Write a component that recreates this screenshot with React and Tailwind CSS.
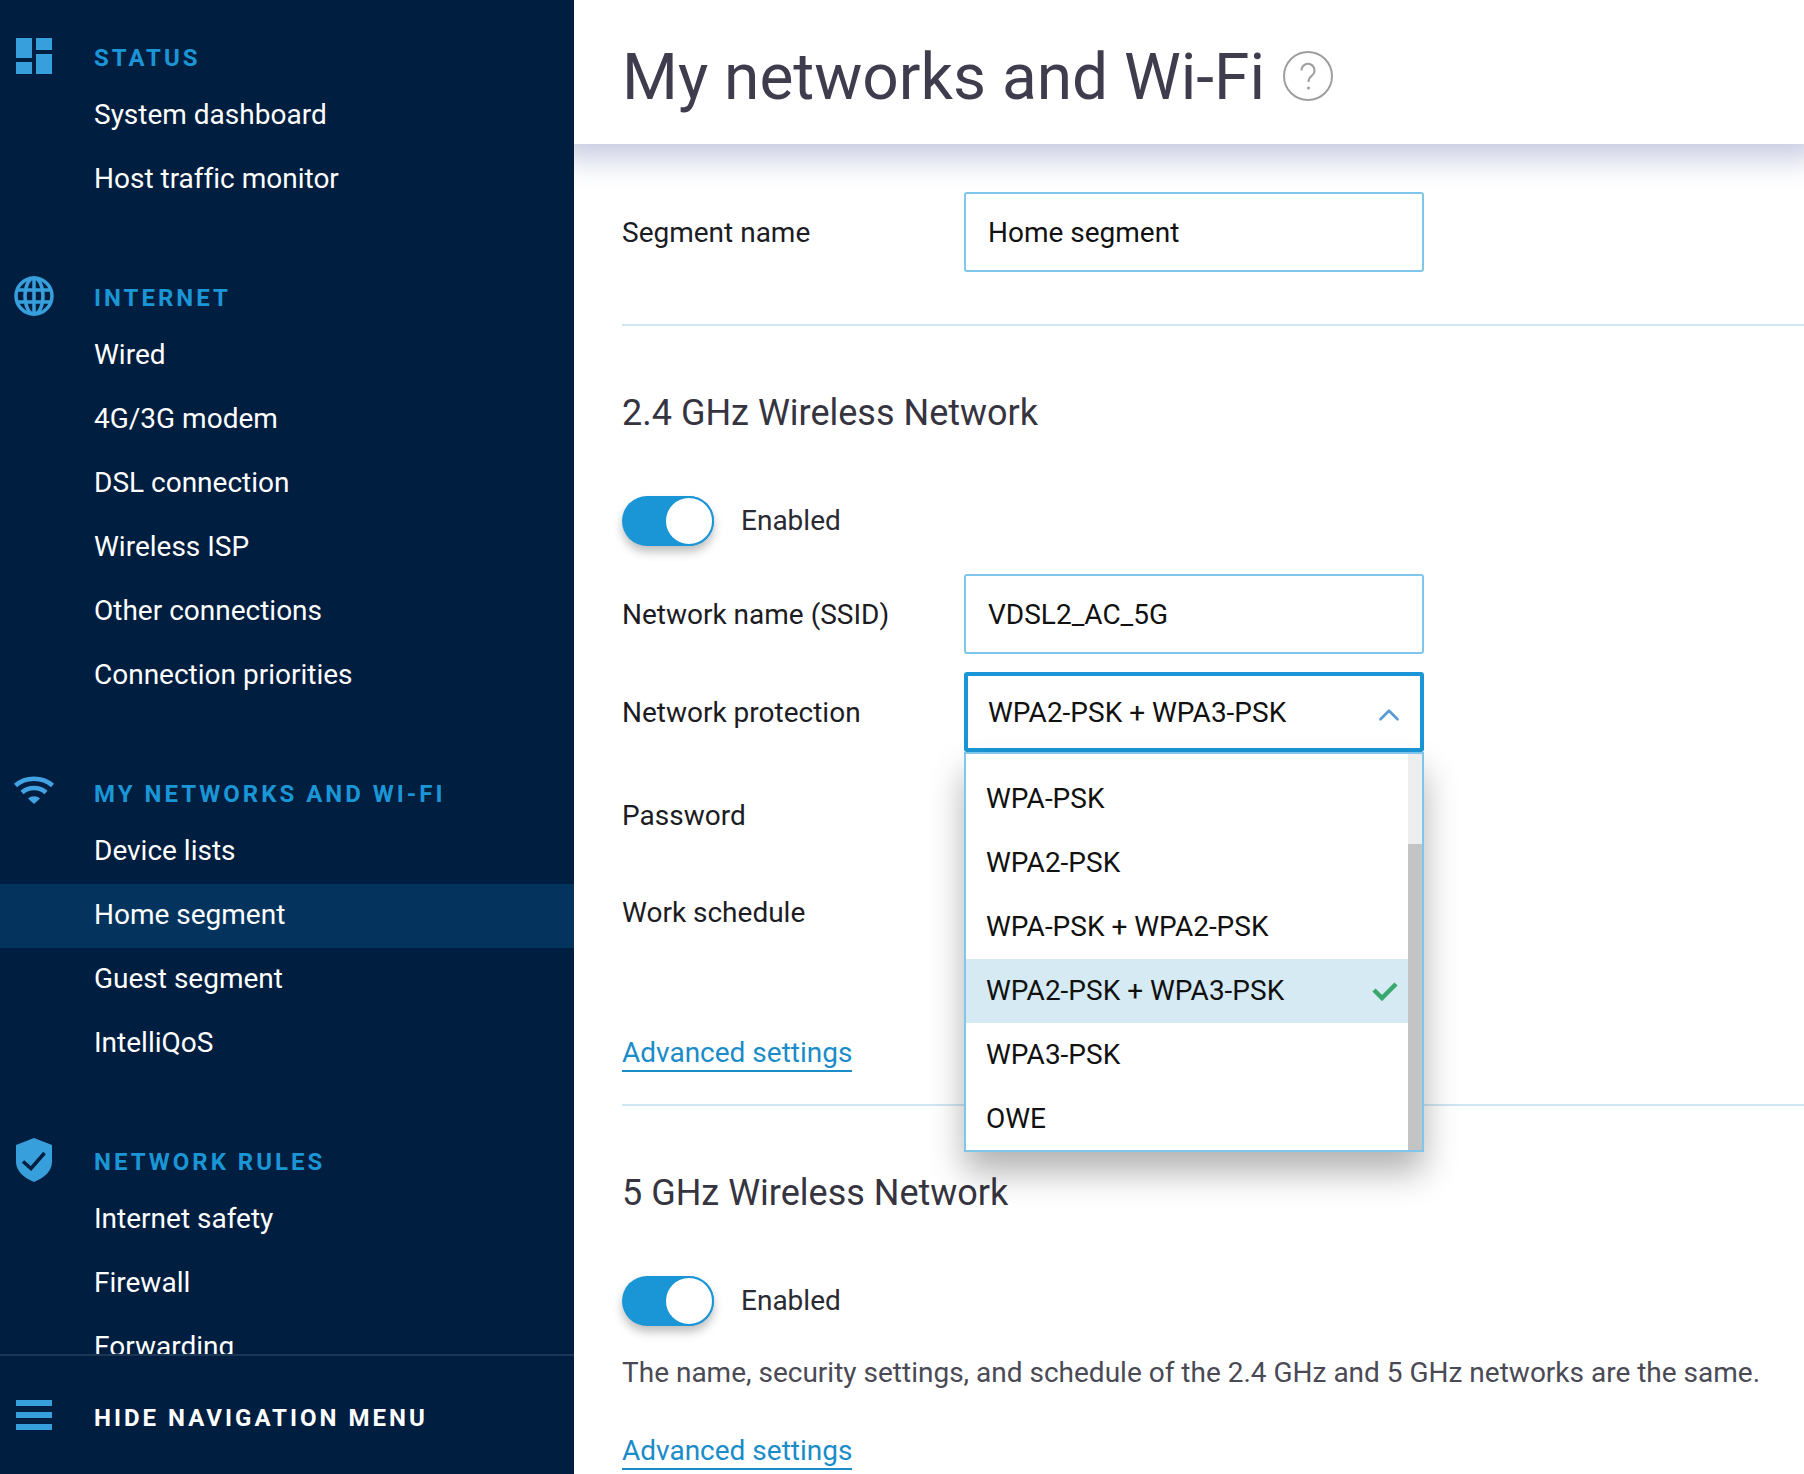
import { ChevronUp } from 'lucide-react';

const NAV = [
    { title: 'STATUS', icon: 'status', items: ['System dashboard', 'Host traffic monitor'] },
    { title: 'INTERNET', icon: 'globe', items: ['Wired', '4G/3G modem', 'DSL connection', 'Wireless ISP', 'Other connections', 'Connection priorities'] },
    { title: 'MY NETWORKS AND WI-FI', icon: 'wifi', items: ['Device lists', 'Home segment', 'Guest segment', 'IntelliQoS'] },
    { title: 'NETWORK RULES', icon: 'shield', items: ['Internet safety', 'Firewall', 'Forwarding'] },
];

const OPTIONS = ['WPA-PSK', 'WPA2-PSK', 'WPA-PSK + WPA2-PSK', 'WPA2-PSK + WPA3-PSK', 'WPA3-PSK', 'OWE'];

function NavIcon({ name }) {
    if (name === 'status') {
        return (
            <svg width="36" height="36" viewBox="0 0 36 36" fill="#379fdc" className="-mt-1">
                <rect x="0" y="0" width="16" height="20" />
                <rect x="20" y="0" width="16" height="12" />
                <rect x="0" y="24" width="16" height="12" />
                <rect x="20" y="16" width="16" height="20" />
            </svg>
        );
    }
    if (name === 'globe') {
        return (
            <svg width="40" height="40" viewBox="0 0 40 40" fill="none" stroke="#379fdc" strokeWidth="3.5" className="-mt-1">
                <circle cx="20" cy="20" r="18" />
                <ellipse cx="20" cy="20" rx="9" ry="18" />
                <path d="M4 14h32M4 26h32M20 2v36" />
            </svg>
        );
    }
    if (name === 'wifi') {
        return (
            <svg width="40" height="28" viewBox="0 0 40 28" className="-mt-2">
                <path d="M1.5 9.5C11.5 .5 28.5 .5 38.5 9.5" fill="none" stroke="#41a3e3" strokeWidth="4.5" />
                <path d="M8 16.5C14.5 10.5 25.5 10.5 32 16.5" fill="none" stroke="#41a3e3" strokeWidth="4.5" />
                <path d="M14 22.5C17.5 19.5 22.5 19.5 26 22.5L20 28Z" fill="#41a3e3" />
            </svg>
        );
    }
    return (
        <svg width="36" height="44" viewBox="0 0 36 44" className="-mt-1">
            <path d="M18 0L36 7V24C36 33 28 40 18 44C8 40 0 33 0 24V7Z" fill="#379fdc" />
            <path d="M7 23.5L15 30.5L28.5 15" fill="none" stroke="#001e3f" strokeWidth="3.5" />
        </svg>
    );
}

function Toggle() {
    return (
        <div className="flex items-center h-[50px]">
            <div className="w-[92px] h-[50px] rounded-full bg-[#1a96d6] flex justify-end items-center shadow-[0_6px_10px_rgba(0,0,0,0.25)]">
                <div className="w-[50px] h-[50px] rounded-full bg-white border-2 border-[#1a96d6]" />
            </div>
            <span className="ml-[27px] text-[28px] leading-9 text-[#2a2a33]">Enabled</span>
        </div>
    );
}

function Field({ label, value, className }) {
    return (
        <div className={`flex items-center ${className}`}>
            <label className="w-[342px] pt-0.5 text-[28px] leading-9 text-[#1c1c24]">{label}</label>
            <div className="w-[460px] h-[80px] border-2 border-[#7fc6ea] rounded-[3px] px-[22px] pt-0.5 flex items-center text-[28px] text-[#111]">
                {value}
            </div>
        </div>
    );
}

function AdvancedLink({ className }) {
    return (
        <div className={className}>
            <a className="inline-block text-[28px] leading-[34px] text-[#1a8cc8] border-b-2 border-[#1a8cc8]">Advanced settings</a>
        </div>
    );
}

export default function App() {
    return (
        <div className="flex w-full h-[1474px] overflow-hidden bg-white font-['Roboto',sans-serif] [font-variant-ligatures:none]">
            {/* Sidebar */}
            <aside className="relative z-20 w-[574px] shrink-0 h-full flex flex-col bg-[#001e3f]">
                <nav className="flex-1 overflow-hidden pt-[33px]">
                    {NAV.map((section) => (
                        <section key={section.title} className="mb-[61px]">
                            <div className="flex items-center h-[51px] pb-0.5">
                                <div className="w-[68px] mr-[26px] flex justify-center">
                                    <NavIcon name={section.icon} />
                                </div>
                                <span className="text-[24px] font-bold tracking-[3px] text-[#1a96d6]">{section.title}</span>
                            </div>
                            {section.items.map((item) => (
                                <div key={item}
                                    className={`h-16 pl-[94px] pb-0.5 flex items-center text-[28px] text-white ${item === 'Home segment' ? 'bg-[#04345e]' : ''}`}>
                                    {item}
                                </div>
                            ))}
                        </section>
                    ))}
                </nav>
                <div className="h-[120px] shrink-0 border-t-2 border-[#1c3755] flex items-center">
                    <div className="w-[68px] mr-[26px] flex justify-center">
                        <div className="w-9 flex flex-col gap-1.5">
                            <div className="h-1.5 bg-[#379fdc]" />
                            <div className="h-1.5 bg-[#379fdc]" />
                            <div className="h-1.5 bg-[#379fdc]" />
                        </div>
                    </div>
                    <span className="mt-1.5 text-[24px] font-bold tracking-[3px] text-white">HIDE NAVIGATION MENU</span>
                </div>
            </aside>

            {/* Main */}
            <main className="flex-1 min-w-0">
                <header className="relative z-10 h-[144px] bg-white pl-12 pt-3 flex items-center shadow-[0_0_28px_14px_rgba(60,75,150,0.3)]">
                    <h1 className="text-[64px] leading-none text-[#3f3d4d]">My networks and Wi-Fi</h1>
                    <svg width="50" height="50" viewBox="0 0 50 50" fill="none" className="ml-[18px] -mt-1">
                        <circle cx="25" cy="25" r="24" stroke="#9e9e9e" strokeWidth="2" />
                        <path d="M18.5 19.5a6.5 6.5 0 1 1 10.5 5c-2.5 1.9-3.5 3-3.5 6.5" stroke="#9e9e9e" strokeWidth="2" />
                        <circle cx="25.5" cy="37" r="1.5" fill="#9e9e9e" />
                    </svg>
                </header>

                <div className="pl-12 pt-12">
                    <Field label="Segment name" value="Home segment" />
                    <div className="mt-[52px] h-0.5 bg-[#cde8f3]" />

                    <h2 className="mt-[63px] text-[36px] leading-[48px] text-[#35343f]">2.4 GHz Wireless Network</h2>
                    <div className="mt-[59px]"><Toggle /></div>
                    <Field label="Network name (SSID)" value="VDSL2_AC_5G" className="mt-7" />

                    <div className="mt-[18px] flex items-center">
                        <label className="w-[342px] pt-0.5 text-[28px] leading-9 text-[#1c1c24]">Network protection</label>
                        <div className="relative w-[460px]">
                            <div className="h-[80px] border-4 border-[#1a96d6] rounded-[3px] pl-5 pr-[14px] pt-0.5 flex items-center justify-between text-[28px] text-[#111]">
                                WPA2-PSK + WPA3-PSK
                                <ChevronUp size={34} strokeWidth={1.9} className="text-[#5a9bd5] mt-1" />
                            </div>
                            {/* Open dropdown */}
                            <div className="absolute z-20 left-0 top-[80px] w-[460px] h-[400px] bg-white border-2 border-[#7fc6ea] flex shadow-[0_20px_32px_rgba(0,0,0,0.3)]">
                                <ul className="flex-1 pt-[13px]">
                                    {OPTIONS.map((opt) => (
                                        <li key={opt}
                                            className={`h-16 pl-5 pr-2.5 flex items-center justify-between text-[28px] text-[#111] ${opt === 'WPA2-PSK + WPA3-PSK' ? 'bg-[#d5eaf3]' : ''}`}>
                                            {opt}
                                            {opt === 'WPA2-PSK + WPA3-PSK' && (
                                                <svg width="26" height="20" viewBox="0 0 26 20" fill="none" stroke="#3aa76d" strokeWidth="4.5">
                                                    <path d="M2 9L10 17L24 3" />
                                                </svg>
                                            )}
                                        </li>
                                    ))}
                                </ul>
                                <div className="w-[14px] flex flex-col bg-[#eeeeee]">
                                    <div className="h-[90px]" />
                                    <div className="flex-1 bg-[#c4c4c4]" />
                                </div>
                            </div>
                        </div>
                    </div>

                    <Field label="Password" value="" className="mt-[23px]" />
                    <Field label="Work schedule" value="" className="mt-[17px]" />
                    <AdvancedLink className="mt-[84px]" />
                    <div className="mt-[32px] h-0.5 bg-[#cde8f3]" />

                    <h2 className="mt-[63px] text-[36px] leading-[48px] text-[#35343f]">5 GHz Wireless Network</h2>
                    <div className="mt-[59px]"><Toggle /></div>
                    <p className="mt-[29px] text-[28px] leading-9 text-[#4a4a55] whitespace-nowrap">
                        The name, security settings, and schedule of the 2.4 GHz and 5 GHz networks are the same.
                    </p>
                    <AdvancedLink className="mt-[43px]" />
                </div>
            </main>
        </div>
    );
}
